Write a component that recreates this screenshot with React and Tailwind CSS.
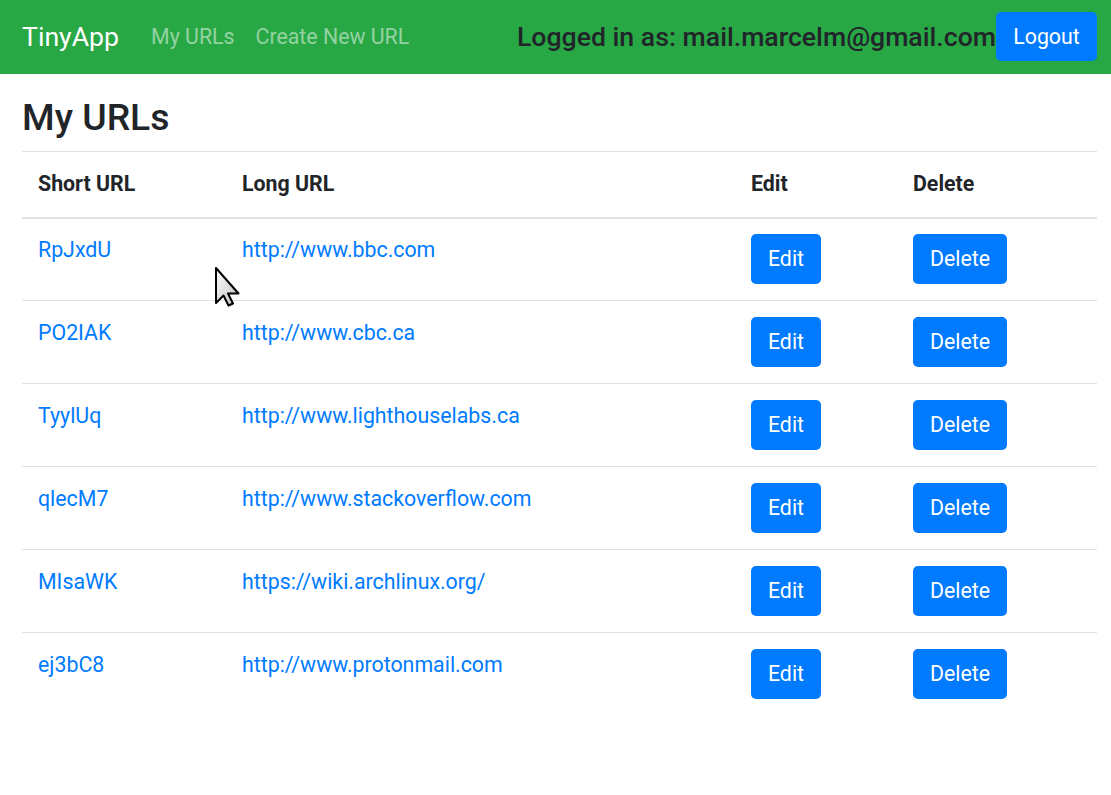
import React from 'react';

const urls = [
  { id: 'RpJxdU', longURL: 'http://www.bbc.com' },
  { id: 'PO2IAK', longURL: 'http://www.cbc.ca' },
  { id: 'TyylUq', longURL: 'http://www.lighthouselabs.ca' },
  { id: 'qlecM7', longURL: 'http://www.stackoverflow.com' },
  { id: 'MIsaWK', longURL: 'https://wiki.archlinux.org/' },
  { id: 'ej3bC8', longURL: 'http://www.protonmail.com' },
];

const Cursor = () => (
  <svg width="26" height="40" viewBox="0 0 26 40" className="absolute left-[214px] top-[267px] pointer-events-none">
    <defs>
      <linearGradient id="cur" x1="0" y1="0" x2="1" y2="1">
        <stop offset="0" stopColor="#ffffff" />
        <stop offset="1" stopColor="#bdbdbd" />
      </linearGradient>
    </defs>
    <path
      d="M2 1 L2 36 L9.5 28.5 L14.5 38.5 L19 36.5 L14 26.5 L24.5 26.5 Z"
      fill="url(#cur)"
      stroke="#000"
      strokeWidth="2"
      strokeLinejoin="round"
    />
  </svg>
);

export default function App() {
  return (
    <div className="relative min-h-screen bg-white font-['Roboto','Liberation_Sans',sans-serif] text-[#212529]">
      {/* Navbar */}
      <nav className="flex h-[74px] items-center bg-[#28a745] pl-[22px] pr-[14px]">
        <span className="text-[26.67px] text-white">TinyApp</span>
        <div className="ml-[32px] flex gap-[21px] text-[21.33px] text-white/50">
          <a href="#">My URLs</a>
          <a href="#">Create New URL</a>
        </div>
        <div className="ml-auto flex items-center">
          <span className="text-[26.67px] font-medium leading-none">Logged in as: mail.marcelm@gmail.com</span>
          <button className="mt-[-1px] h-[49px] w-[101px] rounded-[5px] bg-[#007bff] text-[21.33px] text-white">
            Logout
          </button>
        </div>
      </nav>

      {/* Content */}
      <main className="pl-[22px] pr-[14px]">
        <h3 className="flex h-[77px] items-center pt-[10px] text-[37.33px] font-medium">My URLs</h3>
        <table className="w-full table-fixed border-collapse text-left text-[21.33px]">
          <thead>
            <tr className="h-[66px] border-t border-b-2 border-t-[#dee2e6] border-b-[#dee2e6]">
              <th className="w-[204px] px-[16px] font-bold">Short URL</th>
              <th className="w-[509px] px-[16px] font-bold">Long URL</th>
              <th className="w-[162px] px-[16px] font-bold">Edit</th>
              <th className="px-[16px] font-bold">Delete</th>
            </tr>
          </thead>
          <tbody>
            {urls.map((url, i) => {
              const pad = i > 0 ? 'pt-[16px]' : 'pt-[15px]';
              return (
                <tr key={url.id} className={`h-[83px] align-top ${i > 0 ? 'border-t border-[#dee2e6]' : ''}`}>
                  <td className={`px-[16px] leading-[32px] ${pad}`}>
                    <a href="#" className="text-[#007bff]">{url.id}</a>
                  </td>
                  <td className={`px-[16px] leading-[32px] ${pad}`}>
                    <a href="#" className="text-[#007bff]">{url.longURL}</a>
                  </td>
                  <td className={`px-[16px] ${pad}`}>
                    <button className="h-[50px] w-[70px] rounded-[5px] bg-[#007bff] text-[21.33px] text-white">Edit</button>
                  </td>
                  <td className={`px-[16px] ${pad}`}>
                    <button className="h-[50px] w-[94px] rounded-[5px] bg-[#007bff] text-[21.33px] text-white">Delete</button>
                  </td>
                </tr>
              );
            })}
          </tbody>
        </table>
      </main>

      <Cursor />
    </div>
  );
}
